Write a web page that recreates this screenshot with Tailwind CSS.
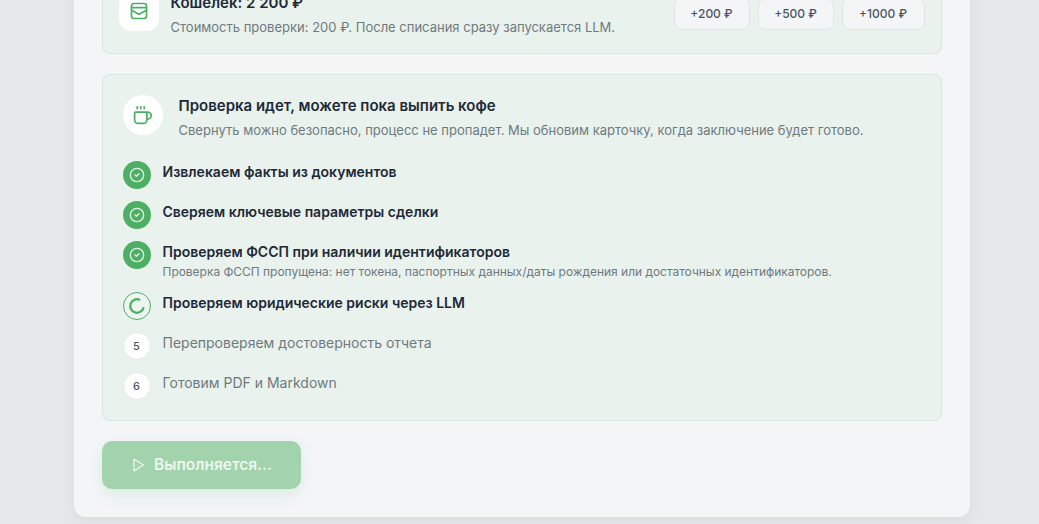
<!DOCTYPE html>
<html lang="ru">
  <head>
    <meta charset="UTF-8" />
    <meta name="viewport" content="width=device-width, initial-scale=1.0" />
    <title>Проверка</title>
    <script src="https://cdn.jsdelivr.net/npm/@tailwindcss/browser@4"></script>
  </head>
  <body class="bg-[#e5e7ea] font-['Inter',sans-serif]">
    <div class="h-[524px] overflow-hidden flex flex-col justify-end items-center pb-[7px] pl-1">
      <main class="w-[896px] shrink-0 bg-[#f3f5f7] rounded-b-xl shadow-[0_4px_16px_rgba(0,0,0,0.05)] px-7 pb-7 flex flex-col gap-5">
        <!-- Wallet -->
        <section class="bg-[#e9f2ed] border border-[#d6e6dd] rounded-lg p-4 pb-[17px] flex justify-between items-center">
          <div class="flex items-start gap-3">
            <div class="w-10 h-10 bg-white rounded-xl flex items-center justify-center text-[#4caf63]">
              <svg class="w-[20px] h-[20px]" viewBox="0 0 24 24" fill="none" stroke="currentColor" stroke-width="2" stroke-linecap="round" stroke-linejoin="round">
                <rect x="3" y="3" width="18" height="18" rx="3" />
                <path d="M3 8h18" />
                <path d="M3 11l9 5 9-5" />
              </svg>
            </div>
            <div class="pt-px">
              <p class="text-[15px] leading-[22px] font-semibold text-[#1f2937]">Кошелек: 2 200 ₽</p>
              <p class="text-[13px] leading-[18px] mt-[4px] text-[#6f7a80]">Стоимость проверки: 200 ₽. После списания сразу запускается LLM.</p>
            </div>
          </div>
          <div class="flex gap-2">
            <button class="w-[76px] h-8 bg-[#f3f5f7] border border-[#dfe6e6] rounded-lg text-xs font-medium text-[#4b5563]">+200 ₽</button>
            <button class="w-[76px] h-8 bg-[#f3f5f7] border border-[#dfe6e6] rounded-lg text-xs font-medium text-[#4b5563]">+500 ₽</button>
            <button class="w-[83px] h-8 bg-[#f3f5f7] border border-[#dfe6e6] rounded-lg text-xs font-medium text-[#4b5563]">+1000 ₽</button>
          </div>
        </section>

        <!-- Progress -->
        <section class="bg-[#e9f2ed] border border-[#d6e6dd] rounded-lg p-5">
          <div class="flex gap-4 mb-[22px]">
            <div class="w-10 h-10 bg-white rounded-full flex items-center justify-center text-[#4caf63]">
              <svg class="w-[21px] h-[21px]" viewBox="0 0 24 24" fill="none" stroke="currentColor" stroke-width="2" stroke-linecap="round" stroke-linejoin="round">
                <path d="M10 2v2" />
                <path d="M14 2v2" />
                <path d="M6 2v2" />
                <path d="M16 8a1 1 0 0 1 1 1v8a4 4 0 0 1-4 4H7a4 4 0 0 1-4-4V9a1 1 0 0 1 1-1h14a4 4 0 1 1 0 8h-1" />
              </svg>
            </div>
            <div>
              <p class="text-[15px] leading-[22px] font-semibold text-[#1f2937]">Проверка идет, можете пока выпить кофе</p>
              <p class="text-[13px] leading-[18px] mt-[4px] text-[#6f7a80]">Свернуть можно безопасно, процесс не пропадет. Мы обновим карточку, когда заключение будет готово.</p>
            </div>
          </div>

          <ul class="flex flex-col gap-3">
            <li class="flex gap-3 min-h-7">
              <span class="w-7 h-7 shrink-0 rounded-full bg-[#4caf63] flex items-center justify-center text-[#e8f1ec]">
                <svg class="w-4 h-4" viewBox="0 0 24 24" fill="none" stroke="currentColor" stroke-width="2" stroke-linecap="round" stroke-linejoin="round"><circle cx="12" cy="12" r="10" /><path d="m9 12 2 2 4-4" /></svg>
              </span>
              <p class="text-[14px] leading-[22px] font-semibold text-[#1f2937]">Извлекаем факты из документов</p>
            </li>
            <li class="flex gap-3 min-h-7">
              <span class="w-7 h-7 shrink-0 rounded-full bg-[#4caf63] flex items-center justify-center text-[#e8f1ec]">
                <svg class="w-4 h-4" viewBox="0 0 24 24" fill="none" stroke="currentColor" stroke-width="2" stroke-linecap="round" stroke-linejoin="round"><circle cx="12" cy="12" r="10" /><path d="m9 12 2 2 4-4" /></svg>
              </span>
              <p class="text-[14px] leading-[22px] font-semibold text-[#1f2937]">Сверяем ключевые параметры сделки</p>
            </li>
            <li class="flex gap-3 min-h-7">
              <span class="w-7 h-7 shrink-0 rounded-full bg-[#4caf63] flex items-center justify-center text-[#e8f1ec]">
                <svg class="w-4 h-4" viewBox="0 0 24 24" fill="none" stroke="currentColor" stroke-width="2" stroke-linecap="round" stroke-linejoin="round"><circle cx="12" cy="12" r="10" /><path d="m9 12 2 2 4-4" /></svg>
              </span>
              <div>
                <p class="text-[14px] leading-[22px] font-semibold text-[#1f2937]">Проверяем ФССП при наличии идентификаторов</p>
                <p class="text-[11.96px] leading-[17px] text-[#6f7a80]">Проверка ФССП пропущена: нет токена, паспортных данных/даты рождения или достаточных идентификаторов.</p>
              </div>
            </li>
            <li class="flex gap-3 min-h-7">
              <span class="w-7 h-7 shrink-0 rounded-full bg-[#eef5f1] border border-[#4caf63] flex items-center justify-center text-[#4caf63]">
                <svg class="w-[18px] h-[18px]" viewBox="0 0 24 24" fill="none" stroke="currentColor" stroke-width="3" stroke-linecap="round" stroke-linejoin="round"><path d="M15 3.5A9 9 0 1 0 20.5 15" /></svg>
              </span>
              <p class="text-[14px] leading-[22px] font-semibold text-[#1f2937]">Проверяем юридические риски через LLM</p>
            </li>
            <li class="flex gap-3 min-h-7">
              <span class="w-7 h-7 shrink-0 rounded-full bg-white border border-[#e3ebe7] flex items-center justify-center text-[11px] font-medium text-[#4b5563]">5</span>
              <p class="text-[14px] leading-[22px] text-[#6f7a80]">Перепроверяем достоверность отчета</p>
            </li>
            <li class="flex gap-3 min-h-7">
              <span class="w-7 h-7 shrink-0 rounded-full bg-white border border-[#e3ebe7] flex items-center justify-center text-[11px] font-medium text-[#4b5563]">6</span>
              <p class="text-[14px] leading-[22px] text-[#6f7a80]">Готовим PDF и Markdown</p>
            </li>
          </ul>
        </section>

        <button class="w-[199px] h-12 rounded-[10px] bg-[#a2d3ac] shadow-[0_6px_14px_rgba(76,175,99,0.12)] flex items-center justify-center gap-2 text-[15.5px] font-semibold text-[#edf6ef]">
          <svg class="w-4 h-4" viewBox="0 0 24 24" fill="none" stroke="currentColor" stroke-width="2" stroke-linecap="round" stroke-linejoin="round"><polygon points="6 3 20 12 6 21 6 3" /></svg>
          Выполняется...
        </button>
      </main>
    </div>
  </body>
</html>
